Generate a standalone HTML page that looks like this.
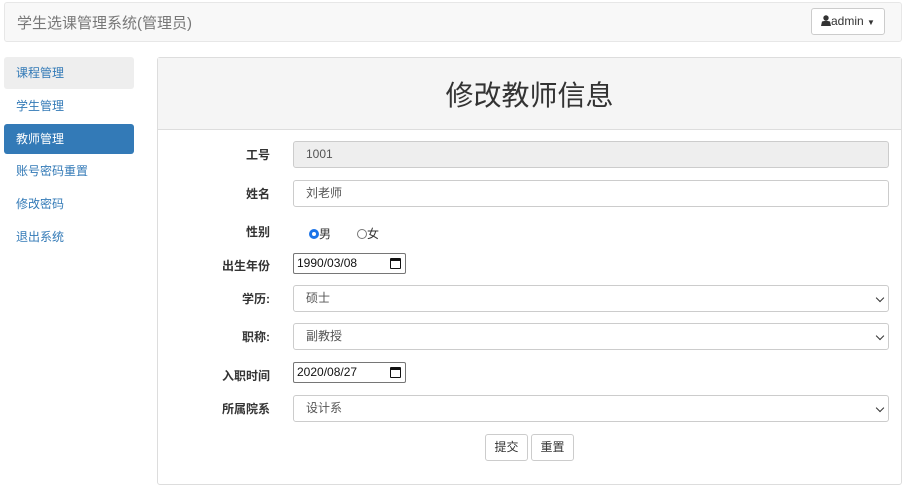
<!DOCTYPE html>
<html><head><meta charset="utf-8"><style>
*{box-sizing:border-box;margin:0;padding:0}
body{width:910px;height:500px;background:#fff;font-family:"Liberation Sans","Noto Sans CJK SC",sans-serif;font-size:12px;color:#333;position:relative;overflow:hidden}
.a{position:absolute}
.nav{left:4px;top:2px;width:898px;height:40px;background:#f8f8f8;border:1px solid #e7e7e7;border-radius:3px}
.side{left:4px;width:130px;height:32px;line-height:32px;padding-left:12px;color:#337ab7;border-radius:3px}
.lbl{width:120px;left:150px;text-align:right;font-weight:bold;color:#333}
.inp{left:293px;width:596px;height:27px;border:1px solid #ccc;border-radius:3px;line-height:25px;padding-left:12px;color:#555}
.date{left:293px;width:113px;height:21px;border:1px solid #767676;border-radius:2px;line-height:19px;padding-left:3px;color:#111;font-size:12px}
.cal{position:absolute;right:4px;top:4px;width:11px;height:11px;border:1.5px solid #111;border-top-width:3px;border-radius:1px}
.chev{position:absolute;right:5px;top:9px;width:6px;height:6px;border-right:1.5px solid #333;border-bottom:1.5px solid #333;transform:rotate(45deg)}
.btn{top:434px;width:43px;height:27px;border:1px solid #ccc;border-radius:3px;text-align:center;line-height:25px;background:#fff}
</style></head><body>
<div class="a nav"></div>
<div class="a" style="left:17px;top:12px;font-size:15px;color:#777">学生选课管理系统(管理员)</div>
<div class="a" style="left:811px;top:8px;width:74px;height:27px;border:1px solid #ccc;border-radius:3px;background:#fff;line-height:25px;padding-left:9px;font-size:12px">
<svg width="10" height="11" viewBox="0 0 10 11" style="vertical-align:-1px"><circle cx="5" cy="3" r="2.7" fill="#333"/><path d="M0 11 L1 6.5 Q5 5 9 6.5 L10 11Z" fill="#333"/></svg>admin <span style="font-size:8px">▼</span></div>

<div class="a side" style="top:57px;background:#eee;color:#337ab7">课程管理</div>
<div class="a side" style="top:90px">学生管理</div>
<div class="a side" style="top:124px;height:30px;line-height:30px;background:#337ab7;color:#fff">教师管理</div>
<div class="a side" style="top:155px">账号密码重置</div>
<div class="a side" style="top:188px">修改密码</div>
<div class="a side" style="top:221px">退出系统</div>

<div class="a" style="left:157px;top:57px;width:745px;height:428px;border:1px solid #ddd;border-radius:3px"></div>
<div class="a" style="left:158px;top:58px;width:743px;height:72px;background:#f5f5f5;border-bottom:1px solid #ddd;text-align:center;line-height:76px;font-size:28px;color:#333">修改教师信息</div>

<div class="a lbl" style="top:146px">工号</div>
<div class="a inp" style="top:141px;background:#eee">1001</div>
<div class="a lbl" style="top:185px">姓名</div>
<div class="a inp" style="top:180px">刘老师</div>
<div class="a lbl" style="top:223px">性别</div>
<div class="a" style="left:309px;top:225px;font-size:12px"><span style="display:inline-block;width:10px;height:10px;border-radius:50%;border:3px solid #1a73e8;background:#fff;vertical-align:-1px"></span>男</div>
<div class="a" style="left:357px;top:225px;font-size:12px"><span style="display:inline-block;width:10px;height:10px;border-radius:50%;border:1px solid #767676;vertical-align:-1px"></span>女</div>
<div class="a lbl" style="top:257px">出生年份</div>
<div class="a date" style="top:253px">1990/03/08<span class="cal"></span></div>
<div class="a lbl" style="top:290px">学历:</div>
<div class="a inp" style="top:285px">硕士<span class="chev"></span></div>
<div class="a lbl" style="top:328px">职称:</div>
<div class="a inp" style="top:323px">副教授<span class="chev"></span></div>
<div class="a lbl" style="top:367px">入职时间</div>
<div class="a date" style="top:362px">2020/08/27<span class="cal"></span></div>
<div class="a lbl" style="top:400px">所属院系</div>
<div class="a inp" style="top:395px">设计系<span class="chev"></span></div>
<div class="a btn" style="left:485px">提交</div>
<div class="a btn" style="left:531px">重置</div>
</body></html>
